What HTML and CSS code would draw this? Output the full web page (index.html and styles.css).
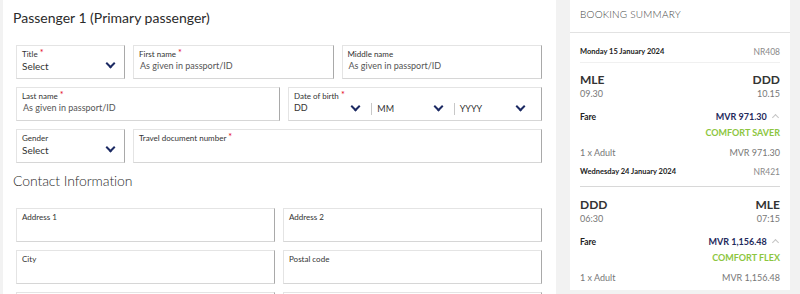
FILE: index.html
```html
<!DOCTYPE html>
<html lang="en">
<head>
    <meta charset="UTF-8">
    <meta name="viewport" content="width=device-width, initial-scale=1.0">
    <title>Passenger details</title>
    <link rel="stylesheet" href="styles.css">
</head>
<body>
    <div class="page">
        <!-- Passenger form -->
        <div class="main">
            <h2 class="section-title">Passenger 1 (Primary passenger)</h2>
            <div class="form">
                <div class="row row-title">
                    <div class="field select">
                        <label>Title <span class="req">*</span></label>
                        <div class="value">Select</div>
                        <span class="chevron"></span>
                    </div>
                    <div class="field">
                        <label>First name <span class="req">*</span></label>
                        <div class="value placeholder">As given in passport/ID</div>
                    </div>
                    <div class="field">
                        <label>Middle name</label>
                        <div class="value placeholder">As given in passport/ID</div>
                    </div>
                </div>
                <div class="row row-name">
                    <div class="field">
                        <label>Last name <span class="req">*</span></label>
                        <div class="value placeholder">As given in passport/ID</div>
                    </div>
                    <div class="field">
                        <label>Date of birth <span class="req">*</span></label>
                        <div class="dob">
                            <div class="dob-part">DD<span class="chevron"></span></div>
                            <div class="dob-part">MM<span class="chevron"></span></div>
                            <div class="dob-part">YYYY<span class="chevron"></span></div>
                        </div>
                    </div>
                </div>
                <div class="row row-doc">
                    <div class="field select">
                        <label>Gender</label>
                        <div class="value">Select</div>
                        <span class="chevron"></span>
                    </div>
                    <div class="field">
                        <label>Travel document number <span class="req">*</span></label>
                        <div class="value"></div>
                    </div>
                </div>
            </div>

            <h2 class="section-title light">Contact Information</h2>
            <div class="form">
                <div class="row row-half">
                    <div class="field"><label>Address 1</label><div class="value"></div></div>
                    <div class="field"><label>Address 2</label><div class="value"></div></div>
                </div>
                <div class="row row-half">
                    <div class="field"><label>City</label><div class="value"></div></div>
                    <div class="field"><label>Postal code</label><div class="value"></div></div>
                </div>
                <div class="row row-half">
                    <div class="field"></div>
                    <div class="field"></div>
                </div>
            </div>
        </div>

        <!-- Booking summary -->
        <div class="aside">
            <div class="summary">
                <div class="summary-head">BOOKING SUMMARY</div>
                <div class="flight">
                    <div class="flight-date">
                        <span>Monday 15 January 2024</span>
                        <span class="flight-no">NR408</span>
                    </div>
                    <div class="line">
                        <span class="airport">MLE</span>
                        <span class="airport">DDD</span>
                    </div>
                    <div class="line times">
                        <span>09.30</span>
                        <span>10.15</span>
                    </div>
                    <div class="line fare">
                        <span class="fare-label">Fare</span>
                        <span class="fare-price">MVR 971.30 <span class="caret"></span></span>
                    </div>
                    <div class="fare-type">COMFORT SAVER</div>
                    <div class="line pax">
                        <span>1 x Adult</span>
                        <span>MVR 971.30</span>
                    </div>
                </div>
                <div class="flight">
                    <div class="flight-date strong-rule">
                        <span>Wednesday 24 January 2024</span>
                        <span class="flight-no">NR421</span>
                    </div>
                    <div class="line">
                        <span class="airport">DDD</span>
                        <span class="airport">MLE</span>
                    </div>
                    <div class="line times">
                        <span>06:30</span>
                        <span>07:15</span>
                    </div>
                    <div class="line fare">
                        <span class="fare-label">Fare</span>
                        <span class="fare-price">MVR 1,156.48 <span class="caret"></span></span>
                    </div>
                    <div class="fare-type">COMFORT FLEX</div>
                    <div class="line pax">
                        <span>1 x Adult</span>
                        <span>MVR 1,156.48</span>
                    </div>
                </div>
            </div>
        </div>
    </div>
</body>
</html>
```

FILE: styles.css
```css
body {
    margin: 0;
    background: #f2f2f2;
    font-family: Lato, "Noto Sans", sans-serif;
    color: #333;
    height: 294px;
    overflow: hidden;
}
.page {
    display: flex;
    align-items: flex-start;
}
.main {
    background: #fff;
    margin-left: 3px;
    width: 553px;
    min-height: 320px;
    padding: 9px 14px 0 10px;
    box-sizing: border-box;
}
.section-title {
    font-size: 14px;
    font-weight: 400;
    margin: 0;
    line-height: 18px;
    color: #2b2b2b;
}
.section-title.light {
    font-weight: 300;
    margin-top: 9px;
    letter-spacing: -0.1px;
}
.form {
    padding: 18px 0 0 3px;
    display: flex;
    flex-direction: column;
    gap: 8px;
}
.row {
    display: grid;
    gap: 8px;
}
.row-title {
    grid-template-columns: 109px 1fr 1fr;
}
.row-name {
    grid-template-columns: 264px 1fr;
}
.row-doc {
    grid-template-columns: 109px 1fr;
}
.row-half {
    grid-template-columns: 1fr 1fr;
}
.field {
    position: relative;
    height: 34px;
    border: 1px solid #e4e4e4;
    border-right-color: #a9a9a9;
    border-bottom-color: #d6d6d6;
    box-sizing: border-box;
    padding: 3px 5px 0 5px;
}
.field label {
    display: block;
    font-size: 8px;
    line-height: 10px;
    color: #333;
}
.req {
    color: #e3001b;
    font-size: 9px;
    vertical-align: top;
    line-height: 8px;
}
.value {
    font-size: 10px;
    line-height: 14px;
    color: #333;
}
.value.placeholder {
    font-size: 9px;
    color: #555;
    padding-left: 1px;
}
.chevron {
    position: absolute;
    right: 10px;
    top: 14px;
    width: 5px;
    height: 5px;
    border-right: 2px solid #1c2a63;
    border-bottom: 2px solid #1c2a63;
    transform: rotate(45deg);
}
.dob {
    display: grid;
    grid-template-columns: 1fr 1fr 1fr;
    margin-left: -5px;
}
.dob-part {
    position: relative;
    font-size: 9px;
    line-height: 14px;
    padding-left: 5px;
    color: #333;
}
.dob-part + .dob-part {
    border-left: 1px solid #c8c8c8;
    margin-top: 2px;
    line-height: 12px;
}
.dob-part .chevron {
    top: 2px;
    right: 12px;
}
.dob-part + .dob-part .chevron {
    top: 0;
}

/* summary */
.aside {
    padding: 0 10px 0 14px;
}
.summary {
    background: #fff;
    width: 220px;
    height: 290px;
}
.summary-head {
    font-size: 10px;
    letter-spacing: 0.2px;
    color: #444;
    font-weight: 300;
    padding: 8px 10px 0 10px;
    height: 24px;
    border-bottom: 1px solid #e2e2e2;
}
.flight {
    padding: 0 10px;
}
.flight-date {
    display: flex;
    justify-content: space-between;
    font-size: 7.5px;
    font-weight: 700;
    color: #222;
    padding: 14px 0 5px 0;
    border-bottom: 1px solid #f0f0f0;
}
.flight-date.strong-rule {
    padding-top: 9px;
    padding-bottom: 9px;
    border-bottom-color: #d8d8d8;
}
.flight-no {
    font-weight: 400;
    color: #8a8a8a;
    font-size: 8.5px;
}
.line {
    display: flex;
    justify-content: space-between;
    align-items: baseline;
}
.airport {
    font-size: 12px;
    font-weight: 700;
    color: #333;
    margin-top: 10px;
    line-height: 14px;
}
.strong-rule + .line .airport {
    margin-top: 11px;
}
.times {
    font-size: 9px;
    color: #777;
    margin-top: 1px;
}
.fare {
    margin-top: 12px;
    font-size: 8.5px;
}
.fare-label {
    font-weight: 700;
    color: #222;
}
.fare-price {
    color: #1f2a5c;
    font-weight: 700;
    font-size: 9px;
}
.caret {
    display: inline-block;
    width: 4px;
    height: 4px;
    border-left: 1px solid #c4c4c4;
    border-top: 1px solid #c4c4c4;
    transform: rotate(45deg);
    margin-left: 4px;
    margin-right: 2px;
}
.fare-type {
    text-align: right;
    font-size: 9px;
    font-weight: 700;
    color: #8dc63f;
    margin-top: 5px;
}
.pax {
    font-size: 9px;
    color: #777;
    margin-top: 9px;
}
```
